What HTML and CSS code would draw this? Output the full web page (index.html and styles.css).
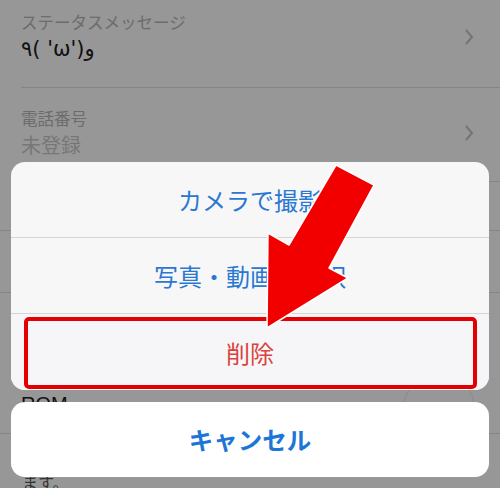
FILE: index.html
```html
<!DOCTYPE html>
<html lang="ja">
<head>
    <meta charset="UTF-8">
    <title>プロフィール</title>
    <link rel="stylesheet" href="styles.css">
</head>
<body>
    <div class="screen">
        <!-- 背景の設定リスト -->
        <div class="settings">
            <div class="row row-status">
                <div class="row-text">
                    <div class="label">ステータスメッセージ</div>
                    <div class="value value-dark">٩( 'ω')و</div>
                </div>
                <svg class="chevron" width="10" height="16" viewBox="0 0 10 16"><polyline points="2,1 8,8 2,15" fill="none" stroke="#747474" stroke-width="2"/></svg>
            </div>
            <div class="row row-phone">
                <div class="row-text">
                    <div class="label">電話番号</div>
                    <div class="value">未登録</div>
                </div>
                <svg class="chevron" width="10" height="16" viewBox="0 0 10 16"><polyline points="2,1 8,8 2,15" fill="none" stroke="#747474" stroke-width="2"/></svg>
            </div>
            <div class="row row-blank"></div>
            <div class="row row-blank short"></div>
            <div class="row row-rom">
                <div class="rom">ROM</div>
                <div class="toggle"></div>
            </div>
            <div class="row-tail">ます。</div>
        </div>

        <!-- アクションシート -->
        <div class="sheet-layer">
            <div class="sheet">
                <div class="sheet-btn">カメラで撮影</div>
                <div class="sheet-btn">写真・動画を選択</div>
                <div class="sheet-btn danger">
                    削除
                    <span class="highlight"></span>
                </div>
            </div>
            <div class="cancel">キャンセル</div>
        </div>

        <!-- 赤い矢印 -->
        <svg class="arrow" width="500" height="488" viewBox="0 0 500 488">
            <polygon points="336,165 374,185 329,268 348,278 267,328 268,233 289,245" fill="#f20000" stroke="#ffffff" stroke-width="1.5" stroke-linejoin="round"/>
        </svg>
    </div>
</body>
</html>
```

FILE: styles.css
```css
* {
    margin: 0;
    padding: 0;
    box-sizing: border-box;
}

body {
    background-color: #979797;
    font-family: "Noto Sans CJK JP", "Noto Sans", sans-serif;
}

.screen {
    position: relative;
    width: 500px;
    height: 488px;
    overflow: hidden;
    background-color: #979797;
}

.settings {
    display: flex;
    flex-direction: column;
}

.row {
    display: flex;
    align-items: center;
    justify-content: space-between;
    margin-left: 21px;
    padding-right: 26px;
    border-bottom: 1px solid #858585;
}

.row-status {
    height: 88px;
    padding-bottom: 14px;
}

.row-phone {
    height: 94px;
    padding-bottom: 4px;
}

.row-blank {
    height: 49px;
    margin-left: 0;
}

.row-blank.short {
    height: 62px;
}

.row-rom {
    height: 141px;
    margin-left: 0;
    padding-left: 21px;
    align-items: flex-start;
    padding-top: 100px;
}

.label {
    font-size: 16.5px;
    line-height: 24px;
    color: #6c6c6c;
}

.value {
    font-size: 20px;
    line-height: 30px;
    color: #777777;
}

.value-dark {
    color: #111111;
    font-family: "DejaVu Sans", sans-serif;
    font-size: 21px;
}

.rom {
    font-size: 20px;
    color: #111111;
    font-family: "Liberation Sans", sans-serif;
}

.toggle {
    width: 70px;
    height: 40px;
    margin-top: -10px;
    border: 1px solid #8a8a8a;
    border-radius: 20px;
}

.row-tail {
    padding-left: 22px;
    padding-top: 36px;
    font-size: 16px;
    color: #333333;
}

.sheet-layer {
    position: absolute;
    left: 11px;
    top: 162px;
    width: 478px;
    display: flex;
    flex-direction: column;
    gap: 12px;
}

.sheet {
    display: flex;
    flex-direction: column;
    background-color: #f7f7f7;
    border-radius: 14px;
    overflow: hidden;
}

.sheet-btn {
    position: relative;
    height: 76px;
    display: flex;
    align-items: center;
    justify-content: center;
    font-size: 24px;
    color: #2a78d2;
    border-bottom: 1px solid #d6d6d6;
}

.sheet-btn:last-child {
    border-bottom: none;
}

.sheet-btn.danger {
    color: #d9433d;
    background-color: #f6f6f8;
}

.highlight {
    position: absolute;
    left: 13px;
    right: 12px;
    top: 3px;
    bottom: 1px;
    border: 4px solid #e40000;
    border-radius: 5px;
}

.cancel {
    height: 75px;
    display: flex;
    align-items: center;
    justify-content: center;
    background-color: #ffffff;
    border-radius: 14px;
    font-size: 24.5px;
    font-weight: bold;
    color: #1b76d6;
}

.arrow {
    position: absolute;
    left: 0;
    top: 0;
}
```
